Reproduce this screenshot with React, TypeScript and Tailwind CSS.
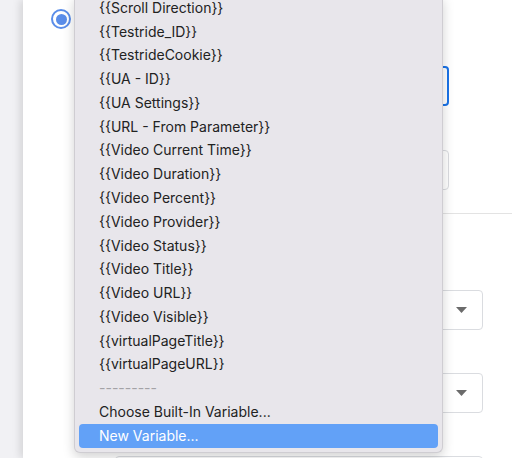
import React from "react";

const items = [
  "{{Scroll Direction}}",
  "{{Testride_ID}}",
  "{{TestrideCookie}}",
  "{{UA - ID}}",
  "{{UA Settings}}",
  "{{URL - From Parameter}}",
  "{{Video Current Time}}",
  "{{Video Duration}}",
  "{{Video Percent}}",
  "{{Video Provider}}",
  "{{Video Status}}",
  "{{Video Title}}",
  "{{Video URL}}",
  "{{Video Visible}}",
  "{{virtualPageTitle}}",
  "{{virtualPageURL}}",
];

function Arrow() {
  return (
    <svg width="11" height="6" viewBox="0 0 11 6">
      <path d="M0 0 L11 0 L5.5 6 Z" fill="#6b6b6b" />
    </svg>
  );
}

export default function App() {
  return (
    <div
      className="w-[512px] h-[458px] relative overflow-hidden flex bg-[#f1f1f4]"
      style={{ fontFamily: "Inter, 'Liberation Sans', sans-serif" }}
    >
      <div className="w-[23px] shrink-0 bg-[#f1f1f4]" />
      <div className="flex-1 bg-white shadow-[-3px_0_8px_rgba(0,0,0,0.12)] flex flex-col">
        <div className="shrink-0 mt-[9px] ml-[28px] w-[20px] h-[20px] rounded-full border-2 border-[#5a8de9] flex items-center justify-center">
          <div className="w-[11px] h-[11px] rounded-full bg-[#5a8de9]" />
        </div>
        <div className="shrink-0 mt-[37px] ml-[64px] mr-[63px] h-[40px] rounded-[4px] border-2 border-[#1a73e8]" />
        <div className="shrink-0 mt-[44px] ml-[64px] mr-[63px] h-[40px] rounded-[4px] border border-[#dadce0]" />
        <div className="shrink-0 mt-[23px] ml-[64px] h-px bg-[#e3e3e3]" />
        <div className="shrink-0 mt-[76px] ml-[92px] mr-[29px] h-[40px] rounded-[4px] border border-[#dadce0] flex items-center justify-end pr-[15px]">
          <Arrow />
        </div>
        <div className="shrink-0 mt-[43px] ml-[92px] mr-[29px] h-[40px] rounded-[4px] border border-[#dadce0] flex items-center justify-end pr-[15px]">
          <Arrow />
        </div>
        <div className="shrink-0 mt-[43px] ml-[92px] mr-[29px] h-[40px] rounded-[4px] border border-[#dadce0]" />
      </div>

      <div className="absolute left-[74px] top-[-4px] w-[369px] bg-[#e8e6eb] border-r border-b border-l border-[#cfcdd2] rounded-b-[6px] shadow-[0_4px_12px_rgba(0,0,0,0.18)] px-[4px] pb-[4px] text-[14px] text-[#222222] leading-none">
        {items.map((t) => (
          <div key={t} className="h-[23.78px] flex items-center pl-[20px]">
            {t}
          </div>
        ))}
        <div className="h-[23.78px] flex items-center pl-[20px] text-[#a3a2a6]">---------</div>
        <div className="h-[23.78px] flex items-center pl-[20px]">Choose Built-In Variable...</div>
        <div className="h-[23.78px] flex items-center pl-[20px] rounded-[4px] bg-[#62a1f7] text-white">
          New Variable...
        </div>
      </div>
    </div>
  );
}
